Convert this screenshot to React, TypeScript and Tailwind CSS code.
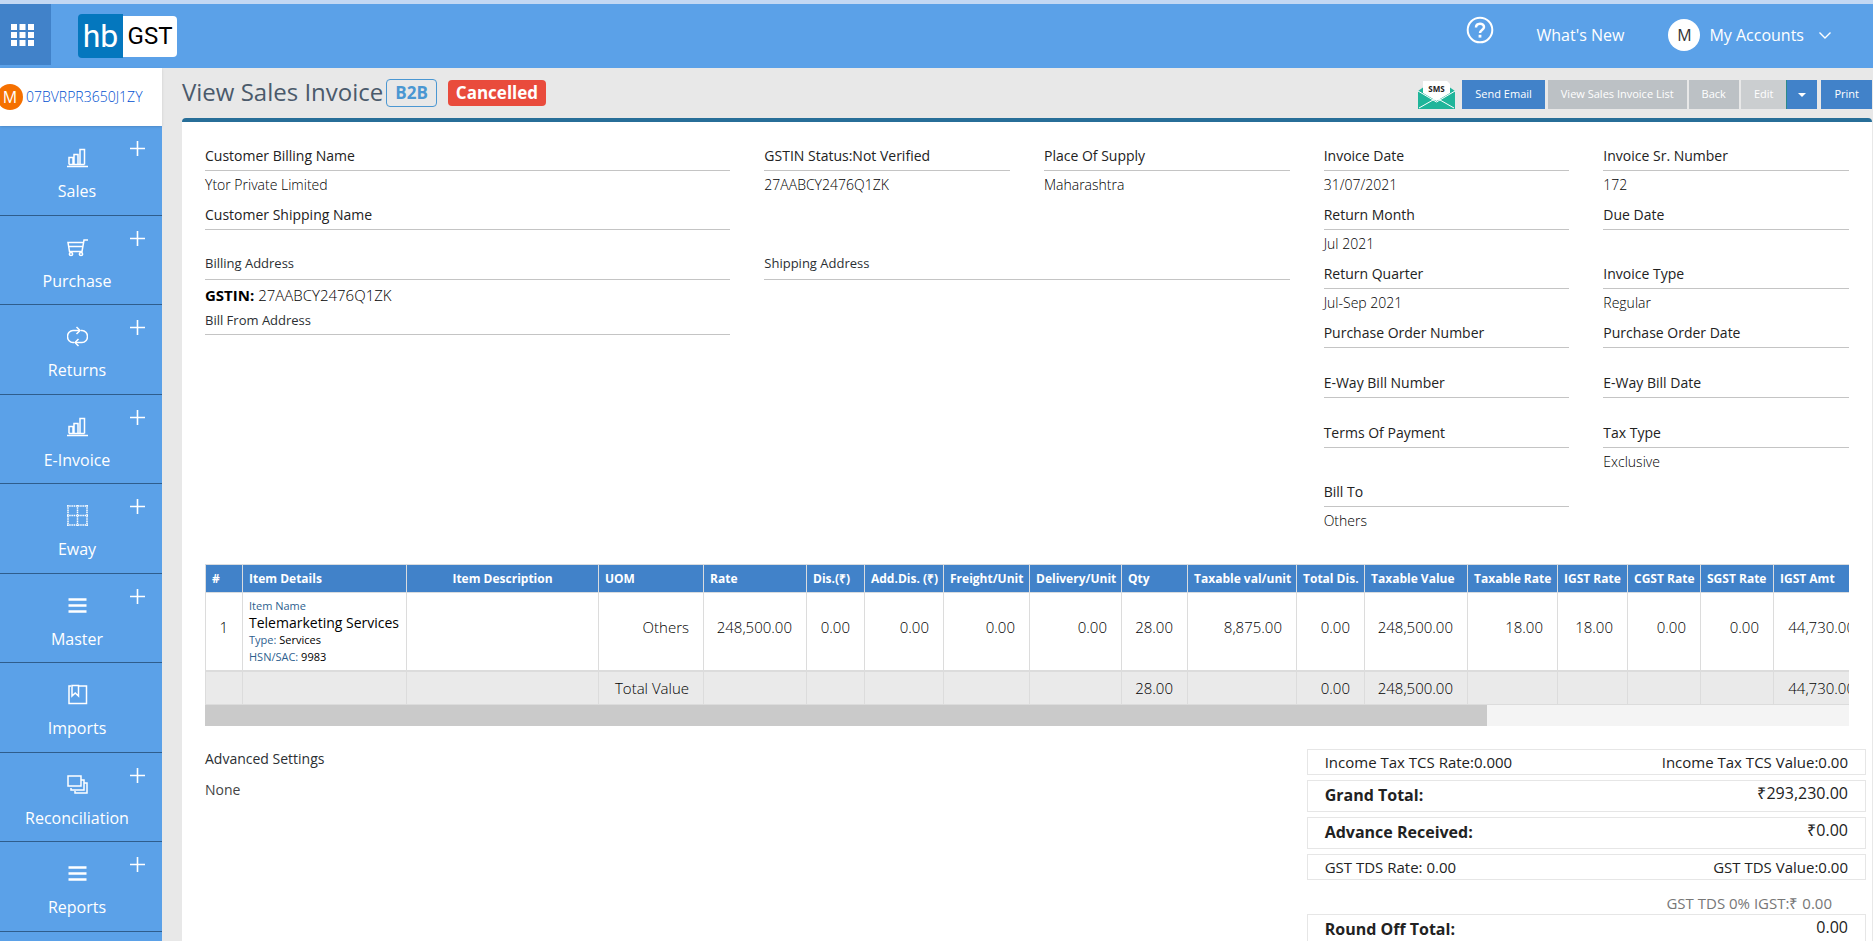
import type { ReactNode } from 'react'

type MenuItem = { label: string; icon: ReactNode; canAdd?: boolean }

const CHART_ICON = <path d="M0 19.5h21M2 17.5v-7h4v7M7 17.5v-10h4v10M13 17.5v-15h4.5v15M2 17.5h15.5" />

const LINES_ICON = <path d="M1.5 4.5h18M1.5 10.5h18M1.5 16.5h18" strokeWidth="2.6" />

const MENU: MenuItem[] = [
  { label: 'Sales', icon: CHART_ICON, canAdd: true },
  {
    label: 'Purchase',
    canAdd: true,
    icon: (
      <>
        <path d="M21 3h-4l-2 11.500H2.500L1 5.500h15M2 9.500h13.500" />
        <circle cx="4" cy="17" r="1.600" />
        <circle cx="14" cy="17" r="1.600" />
      </>
    ),
  },
  {
    label: 'Returns',
    canAdd: true,
    icon: (
      <>
        <path d="M7 16.500h-1A5.500 6 0 0 1 6 4.500h6.500M14 4.500h1A5.500 6 0 0 1 15 16.500H8.500" />
        <path d="M9.500 1l3.500 3.500L9.500 8M11.500 13L8 16.500l3.500 3.500" />
      </>
    ),
  },
  { label: 'E-Invoice', icon: CHART_ICON, canAdd: true },
  {
    label: 'Eway',
    canAdd: true,
    icon: <path d="M0 1h21M0 10.500h21M0 20h21M1 0v21M10.500 0v21M20 0v21" strokeDasharray="1.500 .700" />,
  },
  { label: 'Master', icon: LINES_ICON, canAdd: true },
  {
    label: 'Imports',
    icon: <path d="M4 2H2v17.500h17.500V2H12M5 1.500h6.500V12L8.200 9 5 12z" />,
  },
  {
    label: 'Reconciliation',
    canAdd: true,
    icon: <path d="M1 2h13v10H1zM14 6h3v10H4v-2M17 9h3v10H8v-2" />,
  },
  { label: 'Reports', icon: LINES_ICON, canAdd: true },
]

const DETAILS = [
  { label: 'Invoice Date', value: '31/07/2021' },
  { label: 'Invoice Sr. Number', value: '172' },
  { label: 'Return Month', value: 'Jul 2021' },
  { label: 'Due Date' },
  { label: 'Return Quarter', value: 'Jul-Sep 2021' },
  { label: 'Invoice Type', value: 'Regular' },
  { label: 'Purchase Order Number' },
  { label: 'Purchase Order Date' },
  { label: 'E-Way Bill Number' },
  { label: 'E-Way Bill Date' },
  { label: 'Terms Of Payment' },
  { label: 'Tax Type', value: 'Exclusive' },
  { label: 'Bill To', value: 'Others' },
]

const COLUMNS = [
  { title: '#', width: 37, value: '1', total: '' },
  { title: 'Item Details', width: 164, value: '', total: '' },
  { title: 'Item Description', width: 192, value: '', total: '' },
  { title: 'UOM', width: 105, value: 'Others', total: 'Total Value' },
  { title: 'Rate', width: 103, value: '248,500.00', total: '' },
  { title: 'Dis.(₹)', width: 58, value: '0.00', total: '' },
  { title: 'Add.Dis. (₹)', width: 79, value: '0.00', total: '' },
  { title: 'Freight/Unit', width: 86, value: '0.00', total: '' },
  { title: 'Delivery/Unit', width: 92, value: '0.00', total: '' },
  { title: 'Qty', width: 66, value: '28.00', total: '28.00' },
  { title: 'Taxable val/unit', width: 109, value: '8,875.00', total: '' },
  { title: 'Total Dis.', width: 68, value: '0.00', total: '0.00' },
  { title: 'Taxable Value', width: 103, value: '248,500.00', total: '248,500.00' },
  { title: 'Taxable Rate', width: 90, value: '18.00', total: '' },
  { title: 'IGST Rate', width: 70, value: '18.00', total: '' },
  { title: 'CGST Rate', width: 73, value: '0.00', total: '' },
  { title: 'SGST Rate', width: 73, value: '0.00', total: '' },
  { title: 'IGST Amt', width: 96, value: '44,730.00', total: '44,730.00' },
]

function Field({ label, value, className = '' }: { label: string; value?: string; className?: string }) {
  return (
    <dl className={`text-sm ${value ? 'pb-2' : 'pb-5'} ${className}`}>
      <dt className="h-[30px] border-b border-[#c4c4c4] pt-[5px] font-medium text-[#222]">{label}</dt>
      {value && <dd className="h-[21px] pt-[5px] leading-[17px] font-light text-black">{value}</dd>}
    </dl>
  )
}

function TopBar() {
  return (
    <header className="flex h-[68px] shrink-0 border-t-4 border-[#c3d8f3] bg-[#5ba1e8] text-white">
      <button className="flex h-[61px] w-[51px] items-center bg-[#4182c9] pl-[11px]" aria-label="Apps">
        <svg width="23" height="22" viewBox="0 0 23 22" fill="currentColor">
          {[0, 8.5, 17].map((x) => [0, 8, 16].map((y) => <rect key={`${x}-${y}`} x={x} y={y} width="6" height="6" />))}
        </svg>
      </button>
      <a href="#" className="ml-[27px] mt-[10px] flex h-[44px] items-center font-['Roboto',sans-serif]">
        <span className="flex h-[44px] w-[45px] items-center justify-center rounded-l-sm bg-[#0477be] text-[32px] leading-none">
          hb
        </span>
        <span className="flex h-[41px] w-[54px] items-center justify-center rounded-r-sm bg-white text-2xl text-black">
          GST
        </span>
      </a>
      <nav className="ml-auto flex items-center pr-[42px] pb-[2px] font-medium">
        <a href="#" aria-label="Help" className="mb-[10px]">
          <svg width="28" height="28" viewBox="0 0 28 28" fill="none" stroke="currentColor" strokeWidth="2">
            <circle cx="14" cy="14" r="12.300" />
            <path d="M10 11.500c0-5 8-5 8-.5 0 3-4 3-4 6" strokeWidth="2.500" />
            <path d="M14 18.800v2.800" strokeWidth="2.800" />
          </svg>
        </a>
        <a href="#" className="ml-[43px]">What's New</a>
        <button className="ml-11 flex items-center">
          <span className="mr-[9px] flex size-8 items-center justify-center rounded-full bg-white text-[#333]">M</span>
          My Accounts
          <svg width="12" height="7" viewBox="0 0 12 7" fill="none" stroke="currentColor" className="ml-[15px]">
            <path d="M.5 .5L6 6l5.500-5.500" strokeWidth="1.400" />
          </svg>
        </button>
      </nav>
    </header>
  )
}

function Sidebar() {
  return (
    <aside className="w-[162px] shrink-0 bg-[#5ba1e8] text-white">
      <a href="#" className="flex h-[58px] items-center bg-white text-sm font-light text-[#0050d0] shadow-sm">
        <span className="-ml-[3px] mr-[3px] flex size-[26px] items-center justify-center rounded-full bg-[#f57000] text-base font-normal text-white">
          M
        </span>
        07BVRPR3650J1ZY
      </a>
      <ul className="grid min-h-[806px] auto-rows-fr">
        {MENU.map((item) => (
          <li key={item.label} className="relative border-b border-[#2f5d8c]">
            <a href="#" className="flex flex-col items-center pr-2 pt-[21px]">
              <svg width="21" height="21" viewBox="0 0 21 21" fill="none" stroke="currentColor" strokeWidth="1.500">
                {item.icon}
              </svg>
              <span className="mt-[11px]">{item.label}</span>
            </a>
            {item.canAdd && (
              <button className="absolute right-[17px] top-[15px]" aria-label={`Add ${item.label}`}>
                <svg width="15" height="15" viewBox="0 0 15 15" stroke="currentColor" strokeWidth="1.600">
                  <path d="M7.500 0v15M0 7.500h15" />
                </svg>
              </button>
            )}
          </li>
        ))}
      </ul>
    </aside>
  )
}

function TitleBar() {
  return (
    <div className="flex h-[50px] items-start pt-3 text-[11px] font-medium text-white">
      <h1 className="text-2xl leading-[23px] font-normal text-[#4b5a6b]">View Sales Invoice</h1>
      <span className="ml-[3px] -mt-px flex h-[28px] items-center rounded border border-[#4a97d2] px-2 text-[17px] font-bold text-[#4a97d2]">
        B2B
      </span>
      <span className="ml-[11px] flex h-[26px] items-center rounded bg-[#e94b3c] px-2 text-[17px] font-bold">Cancelled</span>
      <div className="ml-auto flex h-[29px] items-stretch">
        <button className="mr-[7px]" aria-label="Send SMS">
          <svg width="37" height="28" viewBox="0 0 37 28">
            <path d="M0 10L5 6.500h27l5 3.500v18H0z" fill="#1fb59a" />
            <path d="M5 0h24l3 3v9L18.500 20 5 12z" fill="#fff" />
            <path d="M1 27L18.500 17 36 27M0 10l18.500 11L37 10" fill="none" stroke="#fff" />
            <text x="18.500" y="11" fontSize="8" fontWeight="700" textAnchor="middle" fill="#222">SMS</text>
          </svg>
        </button>
        <button className="mr-[3px] bg-[#4182c9] px-[13px]">Send Email</button>
        <button className="mr-[2px] bg-[#bcc1c5] px-[13px]">View Sales Invoice List</button>
        <button className="mr-[2px] bg-[#bcc1c5] px-[13px]">Back</button>
        <button className="bg-[#cbced0] px-[13px]" disabled>Edit</button>
        <button className="mr-1 flex w-[31px] items-center justify-center border-l border-[#2c8a8a] bg-[#4182c9]" aria-label="More actions">
          <span className="border-x-4 border-t-4 border-x-transparent border-t-white" />
        </button>
        <button className="bg-[#4182c9] px-[13px]">Print</button>
      </div>
    </div>
  )
}

function ItemsTable() {
  return (
    <div className="mt-7">
      <div className="overflow-hidden">
        <table className="w-[1664px] table-fixed border-collapse text-right text-black">
          <colgroup>
            {COLUMNS.map((col) => (
              <col key={col.title} style={{ width: col.width }} />
            ))}
          </colgroup>
          <thead>
            <tr className="h-7 bg-[#4182c9] text-left text-xs text-white">
              {COLUMNS.map((col) => (
                <th
                  key={col.title}
                  className={`whitespace-nowrap border border-[#d9dcdf] px-[6px] font-bold ${col.title === 'Item Description' ? 'text-center' : ''}`}
                >
                  {col.title}
                </th>
              ))}
            </tr>
          </thead>
          <tbody>
            <tr className="h-[78px] text-[15px] font-light">
              {COLUMNS.map((col) =>
                col.title === 'Item Details' ? (
                  <td
                    key={col.title}
                    className="whitespace-nowrap border border-b-2 border-[#dcdcdc] px-[6px] text-left text-[11px] leading-[17px] font-normal"
                  >
                    <div className="text-[#2f5f8f]">Item Name</div>
                    <div className="text-sm leading-[17px] font-medium">Telemarketing Services</div>
                    <div><span className="text-[#2f5f8f]">Type:</span> Services</div>
                    <div><span className="text-[#2f5f8f]">HSN/SAC:</span> 9983</div>
                  </td>
                ) : (
                  <td key={col.title} className="border border-b-2 border-[#dcdcdc] pr-[14px] pb-2">{col.value}</td>
                ),
              )}
            </tr>
            <tr className="h-[34px] bg-[#eaeaea] text-[15px] font-light">
              {COLUMNS.map((col) => (
                <td key={col.title} className="border border-[#dcdcdc] pr-[14px]">{col.total}</td>
              ))}
            </tr>
          </tbody>
        </table>
      </div>
      <div className="h-[21px] bg-[#f4f4f4]">
        <div className="h-full w-[78%] bg-[#cacaca]" />
      </div>
    </div>
  )
}

function Totals() {
  return (
    <div className="col-span-2 -mx-[17px] text-[15px] font-medium text-[#222]">
      <div className="flex h-[26px] items-center justify-between border border-[#e6e6e6] px-[17px]">
        <span>Income Tax TCS Rate:0.000</span>
        <span>Income Tax TCS Value:0.00</span>
      </div>
      <div className="mt-[5px] flex h-8 justify-between border border-[#e6e6e6] px-[17px] text-base">
        <span className="pt-[2px] font-bold">Grand Total:</span>
        <span>₹293,230.00</span>
      </div>
      <div className="mt-[5px] flex h-8 justify-between border border-[#e6e6e6] px-[17px] text-base">
        <span className="pt-[2px] font-bold">Advance Received:</span>
        <span>₹0.00</span>
      </div>
      <div className="mt-[5px] flex h-[26px] items-center justify-between border border-[#e6e6e6] px-[17px]">
        <span>GST TDS Rate: 0.00</span>
        <span>GST TDS Value:0.00</span>
      </div>
      <p className="h-[34px] pr-[34px] pt-3 text-right text-[#777]">GST TDS 0% IGST:₹ 0.00</p>
      <div className="flex h-8 justify-between border border-[#e6e6e6] px-[17px] text-base">
        <span className="pt-[2px] font-bold">Round Off Total:</span>
        <span>0.00</span>
      </div>
    </div>
  )
}

export default function App() {
  return (
    <div className="flex h-screen flex-col overflow-hidden bg-[#e8e8e8] font-['Open_Sans',sans-serif]">
      <TopBar />
      <div className="flex min-h-0 grow">
        <Sidebar />
        <main className="min-w-0 grow pl-5 pr-px">
          <TitleBar />
          <section className="min-h-full rounded-t border-t-4 border-[#276e98] bg-white px-[23px] pt-[19px]">
            <div className="grid grid-cols-6 gap-x-[34px]">
              <div className="col-span-4">
                <div className="grid grid-cols-4 gap-x-[34px]">
                  <Field label="Customer Billing Name" value="Ytor Private Limited" className="col-span-2" />
                  <Field label="GSTIN Status:Not Verified" value="27AABCY2476Q1ZK" />
                  <Field label="Place Of Supply" value="Maharashtra" />
                  <Field label="Customer Shipping Name" className="col-span-2" />
                </div>
                <div className="grid grid-cols-2 gap-x-[34px] text-[13px] leading-[16px] font-medium text-[#2b2f33]">
                  <h2 className="h-[30px] border-b border-[#c4c4c4] pt-[5px]">Billing Address</h2>
                  <h2 className="h-[30px] border-b border-[#c4c4c4] pt-[5px]">Shipping Address</h2>
                  <div>
                    <p className="h-[32px] pt-1 text-[15px] leading-[22px] font-light text-black">
                      <b className="font-bold">GSTIN:</b> 27AABCY2476Q1ZK
                    </p>
                    <h2 className="h-[23px] border-b border-[#c4c4c4]">Bill From Address</h2>
                  </div>
                </div>
              </div>
              <div className="col-span-2 grid grid-cols-2 content-start gap-x-[34px]">
                {DETAILS.map((field) => (
                  <Field key={field.label} {...field} />
                ))}
              </div>
            </div>
            <ItemsTable />
            <div className="mt-[23px] grid grid-cols-6 gap-x-[34px]">
              <div className="col-span-4 text-sm">
                <h2 className="font-medium text-[#2b2f33]">Advanced Settings</h2>
                <p className="mt-[11px] text-[#444]">None</p>
              </div>
              <Totals />
            </div>
          </section>
        </main>
      </div>
    </div>
  )
}
